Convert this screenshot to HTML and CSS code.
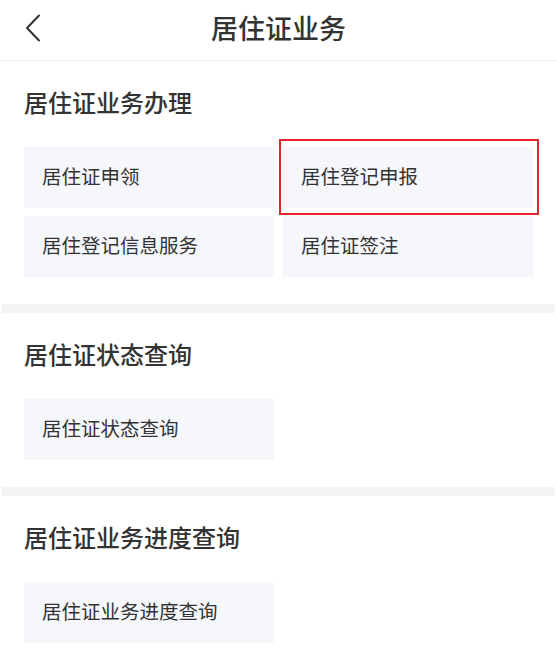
FILE: index.html
```html
<!DOCTYPE html>
<html lang="zh-CN">
  <head>
    <meta charset="UTF-8" />
    <meta name="viewport" content="width=device-width, initial-scale=1.0" />
    <title>居住证业务</title>
    <link rel="stylesheet" href="styles.css">
  </head>
  <body>
    <header class="nav-bar">
      <a class="back-btn" href="#">
        <svg width="16" height="28" viewBox="0 0 16 28">
          <polyline points="14,1.5 2,14 14,26.5" fill="none" stroke="#333" stroke-width="2" stroke-linecap="round" stroke-linejoin="round" />
        </svg>
      </a>
      <h1 class="nav-title">居住证业务</h1>
    </header>

    <section class="group">
      <h2 class="group-title">居住证业务办理</h2>
      <div class="item-grid">
        <a class="item" href="#">居住证申领</a>
        <a class="item item-marked" href="#">居住登记申报</a>
        <a class="item" href="#">居住登记信息服务</a>
        <a class="item" href="#">居住证签注</a>
      </div>
    </section>
    <div class="divider"></div>

    <section class="group">
      <h2 class="group-title">居住证状态查询</h2>
      <div class="item-grid">
        <a class="item" href="#">居住证状态查询</a>
      </div>
    </section>
    <div class="divider"></div>

    <section class="group">
      <h2 class="group-title">居住证业务进度查询</h2>
      <div class="item-grid">
        <a class="item" href="#">居住证业务进度查询</a>
      </div>
    </section>
  </body>
</html>
```

FILE: styles.css
```css
body {
  font-family: "Noto Sans CJK SC", "Noto Sans", sans-serif;
  background: #fff;
  color: #333;
  margin: 0;
}

.nav-bar {
  position: relative;
  height: 60px;
  border-bottom: 1px solid #f0f0f0;
  display: flex;
  align-items: center;
  justify-content: center;
}

.back-btn {
  position: absolute;
  left: 25px;
  top: 14px;
  display: block;
  line-height: 0;
}

.nav-title {
  margin: 0;
  padding-bottom: 4px;
  font-size: 27px;
  font-weight: 500;
  color: #333;
  line-height: 56px;
}

.group {
  padding: 0 24px 27px;
}

.group-title {
  margin: 0;
  padding-bottom: 4px;
  font-size: 24px;
  font-weight: 500;
  line-height: 82px;
  color: #333;
}

.item-grid {
  display: grid;
  grid-template-columns: 250px 250px;
  column-gap: 9px;
  row-gap: 8px;
}

.item {
  display: flex;
  align-items: center;
  box-sizing: border-box;
  height: 61px;
  padding: 0 0 5px 18px;
  background: #f5f7fb;
  font-size: 19.5px;
  color: #333;
  text-decoration: none;
}

.item-marked {
  position: relative;
}

.item-marked::after {
  content: "";
  position: absolute;
  top: -8px;
  left: -4px;
  right: -6px;
  bottom: -7px;
  border: 2px solid #e3242b;
}

.divider {
  height: 9px;
  margin: 0 2px;
  background: #f3f3f3;
}
```
